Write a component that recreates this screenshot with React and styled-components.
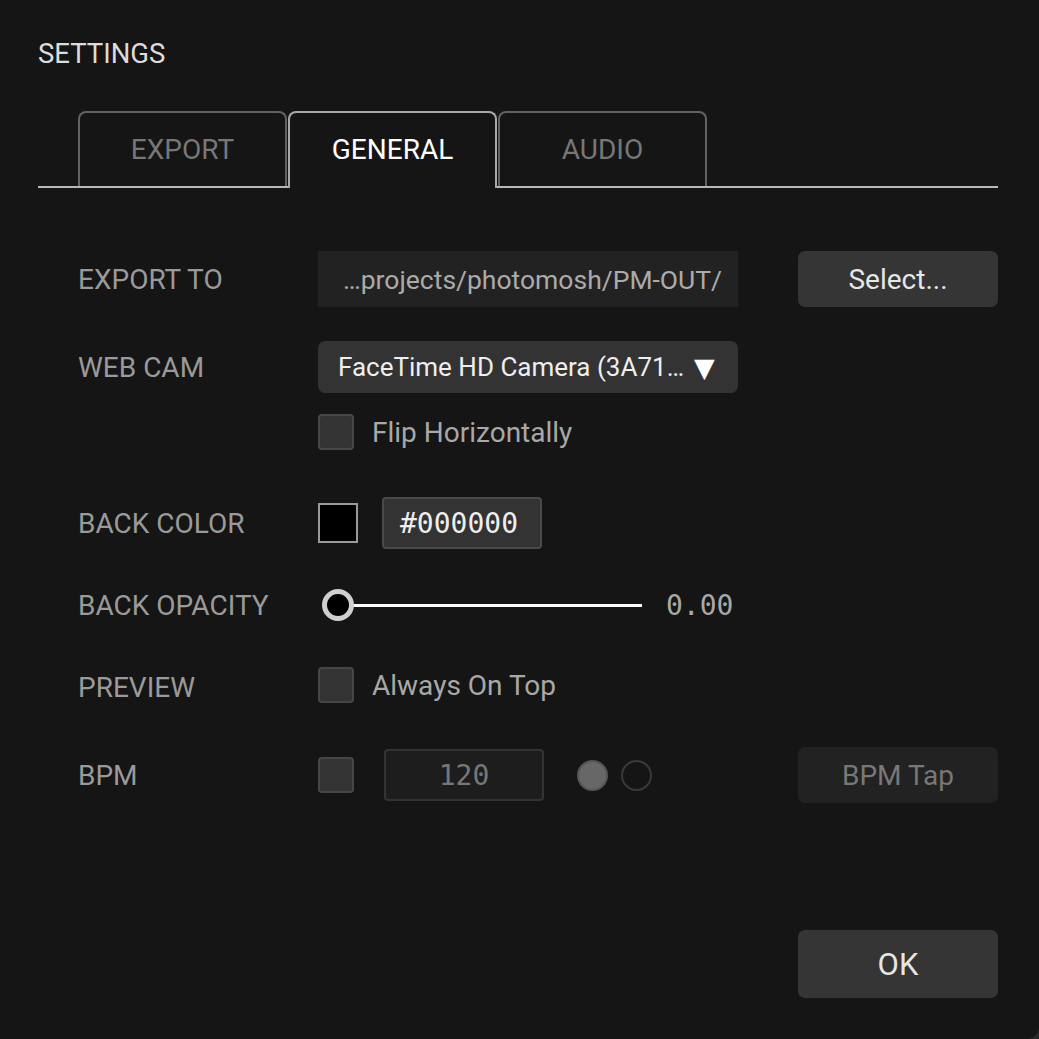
import React from "react";
import styled, { createGlobalStyle } from "styled-components";

const Global = createGlobalStyle`
  html, body { margin: 0; padding: 0; background: #2a2a2a; }
  body { font-family: Roboto, "Liberation Sans", Arial, sans-serif; }
  * { box-sizing: border-box; }
`;

const Dialog = styled.div`
  width: 1039px;
  height: 1039px;
  background: #151515;
  border-bottom-right-radius: 12px;
  padding: 0 41px 41px 38px;
  display: flex;
  flex-direction: column;
  overflow: hidden;
`;

const Title = styled.h1`
  margin: 39px 0 0;
  font-size: 27.5px;
  line-height: 30px;
  font-weight: 400;
  color: #dcdcdc;
`;

const TabBar = styled.div`
  margin-top: 42px;
  display: flex;
  gap: 1px;
  padding-left: 40px;
  border-bottom: 2px solid #b8b8b8;
  height: 77px;
`;

const Tab = styled.div`
  width: 209px;
  height: ${(p) => (p.$active ? "77px" : "75px")};
  margin-bottom: ${(p) => (p.$active ? "-2px" : "0")};
  border: 2px solid ${(p) => (p.$active ? "#a8a8a8" : "#626262")};
  border-bottom: none;
  border-radius: 8px 8px 0 0;
  background: #151515;
  display: flex;
  align-items: center;
  justify-content: center;
  padding-bottom: ${(p) => (p.$active ? "2px" : "0")};
  font-size: 28px;
  color: ${(p) => (p.$active ? "#ffffff" : "#777777")};
`;

const Form = styled.div`
  padding-left: 40px;
  display: flex;
  flex-direction: column;
`;

const Row = styled.div`
  display: flex;
  align-items: center;
  height: 56px;
  margin-top: ${(p) => p.$mt}px;
`;

const Label = styled.div`
  width: 240px;
  flex: none;
  font-size: 28px;
  color: #9a9a9a;
  padding-top: ${(p) => p.$dy || 0}px;
`;

const PathField = styled.div`
  width: 420px;
  height: 56px;
  background: #222222;
  display: flex;
  align-items: center;
  padding-left: 25px;
  font-size: 26.5px;
  color: #ababab;
  white-space: nowrap;
  overflow: hidden;
`;

const Button = styled.div`
  margin-left: auto;
  width: 200px;
  height: ${(p) => p.$h || 56}px;
  border-radius: 7px;
  background: ${(p) => (p.$dim ? "#222222" : "#353535")};
  color: ${(p) => (p.$dim ? "#787878" : "#e6e6e6")};
  font-size: ${(p) => p.$fs || 28}px;
  display: flex;
  align-items: center;
  justify-content: center;
`;

const Dropdown = styled.div`
  width: 420px;
  height: 52px;
  border-radius: 7px;
  background: #333333;
  color: #eeeeee;
  font-size: 26px;
  display: flex;
  align-items: center;
  padding: 0 20px;
  gap: 10px;
  white-space: nowrap;
`;

const Arrow = styled.span`
  font-family: "DejaVu Sans", sans-serif;
  font-size: 27px;
  color: #ffffff;
`;

const Check = styled.div`
  width: 36px;
  height: 36px;
  flex: none;
  border-radius: 4px;
  background: #333333;
  border: 2px solid #464646;
`;

const CheckLabel = styled.span`
  margin-left: 18px;
  font-size: 28px;
  color: #a8a8a8;
`;

const Swatch = styled.div`
  width: 40px;
  height: 40px;
  background: #000;
  border: 2px solid #9a9a9a;
`;

const MonoInput = styled.div`
  width: 160px;
  height: 52px;
  margin-left: ${(p) => p.$ml}px;
  border-radius: 4px;
  background: ${(p) => (p.$dim ? "#1d1d1d" : "#333333")};
  border: 2px solid ${(p) => (p.$dim ? "#333333" : "#4a4a4a")};
  color: ${(p) => (p.$dim ? "#777777" : "#eeeeee")};
  font-family: "DejaVu Sans Mono", "Liberation Mono", monospace;
  font-size: 28px;
  display: flex;
  align-items: center;
  justify-content: ${(p) => (p.$center ? "center" : "flex-start")};
  padding-left: ${(p) => (p.$center ? 0 : 16)}px;
`;

const Slider = styled.div`
  position: relative;
  width: 324px;
  height: 32px;
  display: flex;
  align-items: center;
  padding-left: 20px;
`;

const Track = styled.div`
  flex: 1;
  height: 3px;
  background: #ffffff;
`;

const Thumb = styled.div`
  position: absolute;
  left: 4px;
  top: 0;
  width: 32px;
  height: 32px;
  border-radius: 50%;
  background: #000;
  border: 5px solid #cfcfcf;
`;

const Value = styled.span`
  margin-left: 24px;
  font-family: "DejaVu Sans Mono", "Liberation Mono", monospace;
  font-size: 28px;
  color: #a8a8a8;
`;

const Dot = styled.div`
  width: 31px;
  height: 31px;
  border-radius: 50%;
  margin-left: ${(p) => p.$ml}px;
  background: ${(p) => (p.$on ? "#676767" : "transparent")};
  border: 2px solid ${(p) => (p.$on ? "#555555" : "#3a3a3a")};
`;

const Footer = styled.div`
  margin-top: auto;
  display: flex;
`;

export default function App() {
  return (
    <>
      <Global />
      <Dialog>
        <Title>SETTINGS</Title>
        <TabBar>
          <Tab>EXPORT</Tab>
          <Tab $active>GENERAL</Tab>
          <Tab>AUDIO</Tab>
        </TabBar>
        <Form>
          <Row $mt={63}>
            <Label>EXPORT TO</Label>
            <PathField>…projects/photomosh/PM-OUT/</PathField>
            <Button>Select...</Button>
          </Row>
          <Row $mt={32}>
            <Label>WEB CAM</Label>
            <Dropdown>
              <span>FaceTime HD Camera (3A71…</span>
              <Arrow>▼</Arrow>
            </Dropdown>
          </Row>
          <Row $mt={9}>
            <Label />
            <Check />
            <CheckLabel>Flip Horizontally</CheckLabel>
          </Row>
          <Row $mt={35}>
            <Label>BACK COLOR</Label>
            <Swatch />
            <MonoInput $ml={24}>#000000</MonoInput>
          </Row>
          <Row $mt={26}>
            <Label>BACK OPACITY</Label>
            <Slider>
              <Track />
              <Thumb />
            </Slider>
            <Value>0.00</Value>
          </Row>
          <Row $mt={24}>
            <Label $dy={4}>PREVIEW</Label>
            <Check />
            <CheckLabel>Always On Top</CheckLabel>
          </Row>
          <Row $mt={34}>
            <Label>BPM</Label>
            <Check />
            <MonoInput $ml={30} $dim $center>120</MonoInput>
            <Dot $on $ml={33} />
            <Dot $ml={13} />
            <Button $dim>BPM Tap</Button>
          </Row>
        </Form>
        <Footer>
          <Button $h={68} $fs={31}>OK</Button>
        </Footer>
      </Dialog>
    </>
  );
}
